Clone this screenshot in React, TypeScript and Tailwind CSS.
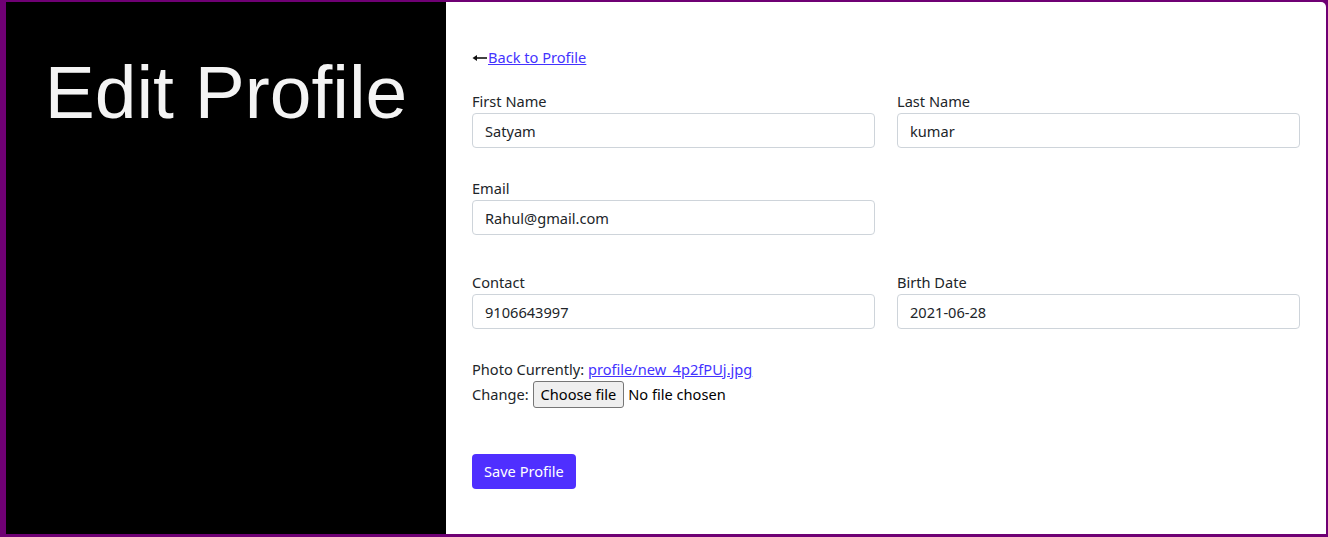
import React from 'react';

const font = { fontFamily: '"Noto Sans", "Open Sans", sans-serif' };

interface FieldProps {
  label: string;
  value: string;
}

const Field: React.FC<FieldProps> = ({ label, value }) => (
  <div className="flex flex-col">
    <label className="text-[14.6px] leading-[21px] text-[#212529]">{label}</label>
    <input
      defaultValue={value}
      className="mt-[1px] h-[35px] w-full rounded-[4px] border border-[#ced4da] bg-white px-[12px] text-[14.6px] text-[#212529] outline-none"
    />
  </div>
);

export default function App() {
  return (
    <div className="h-[537px] w-full bg-[#6f0074] pl-[6px] pt-[2px] pr-[2px] pb-[3px]">
      <div className="flex h-full">
        <div className="w-[440px] shrink-0 bg-black pt-[53px]">
          <h1
            className="text-center text-[75px] leading-none text-[#f4f4f4]"
            style={{ fontFamily: '"Liberation Sans", Arial, sans-serif' }}
          >
            Edit Profile
          </h1>
        </div>
        <div className="flex-1 rounded-tr-[5px] bg-white px-[26px] pt-[45px]" style={font}>
          <div className="flex items-center text-[14.6px] leading-[21px]">
            <svg width="15" height="8" viewBox="0 0 15 8" className="mr-[1px]">
              <path d="M0.5 4 L5 1 L5 7 Z" fill="#111" />
              <path d="M4 4 H15" stroke="#111" strokeWidth="1.6" />
            </svg>
            <a href="#" className="text-[#4433ff] underline">
              Back to Profile
            </a>
          </div>

          <div className="mt-[23px] grid grid-cols-2 gap-x-[22px]">
            <Field label="First Name" value="Satyam" />
            <Field label="Last Name" value="kumar" />
          </div>

          <div className="mt-[30px] grid grid-cols-2 gap-x-[22px]">
            <Field label="Email" value="Rahul@gmail.com" />
          </div>

          <div className="mt-[37px] grid grid-cols-2 gap-x-[22px]">
            <Field label="Contact" value="9106643997" />
            <Field label="Birth Date" value="2021-06-28" />
          </div>

          <div className="mt-[30px] text-[14.6px] leading-[21px] text-[#212529]">
            <div>
              Photo Currently:{' '}
              <a href="#" className="text-[#4433ff] underline">
                profile/new_4p2fPUj.jpg
              </a>
            </div>
            <div className="mt-[1px] flex items-center">
              <span>Change:</span>
              <span className="ml-[4px] flex h-[27px] items-center rounded-[3px] border border-[#767676] bg-[#efefef] px-[7px] text-black">
                Choose file
              </span>
              <span className="ml-[4px] text-black">No file chosen</span>
            </div>
          </div>

          <button className="mt-[46px] h-[35px] rounded-[4px] bg-[#4f2fff] px-[12px] text-[14.6px] text-white">
            Save Profile
          </button>
        </div>
      </div>
    </div>
  );
}
